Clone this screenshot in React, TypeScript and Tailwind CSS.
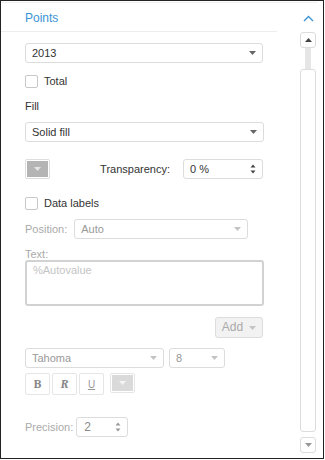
import React from "react";

function Caret({ color = "#666" }: { color?: string }) {
  return (
    <svg width="7" height="4" viewBox="0 0 7 4">
      <path d="M0 0h7L3.5 4z" fill={color} />
    </svg>
  );
}

function Spin({ color = "#444" }: { color?: string }) {
  return (
    <svg width="6" height="10" viewBox="0 0 6 10">
      <path d="M0.5 3.5L3 0.5 5.5 3.5z" fill={color} />
      <path d="M0.5 6.5h5L3 9.5z" fill={color} />
    </svg>
  );
}

function Select({
  value,
  className,
  disabled,
}: {
  value: string;
  className: string;
  disabled?: boolean;
}) {
  return (
    <div
      className={`h-[20px] flex items-center justify-between border border-[#dcdcdc] rounded-[3px] pl-[6px] pr-[6px] ${
        disabled ? "text-[#999]" : "text-[#333]"
      } ${className}`}
    >
      <span>{value}</span>
      <Caret color={disabled ? "#c4c4c4" : "#666"} />
    </div>
  );
}

function Checkbox({ label }: { label: string }) {
  return (
    <div className="h-[14px] flex items-center gap-[6px]">
      <div className="w-[13px] h-[13px] border border-[#c8c8c8] rounded-[2px] bg-white" />
      <span className="text-[#333] pt-[1px]">{label}</span>
    </div>
  );
}

export default function App() {
  return (
    <div
      className="w-[324px] h-[459px] border border-[#222] bg-white text-[11px] leading-[13px] overflow-hidden"
      style={{ fontFamily: '"Liberation Sans", Arial, sans-serif' }}
    >
      <div className="h-[1px]" />
      <div className="w-[316px] border-t border-[#efefef]" />
      <div className="flex">
        <div className="w-[299px] flex flex-col">
          <div className="h-[29px] w-[276px] border-b border-[#ededed] flex items-center pl-[24px] pt-[2px]">
            <span className="text-[12px] text-[#3a93d4]">Points</span>
          </div>

          <div className="pl-[24px] flex flex-col">
            <Select value="2013" className="mt-[11px] w-[238px]" />

            <div className="mt-[11px]">
              <Checkbox label="Total" />
            </div>

            <div className="mt-[11px] h-[13px] pt-[1px] text-[#333]">Fill</div>

            <Select value="Solid fill" className="mt-[10px] w-[239px]" />

            <div className="mt-[17px] h-[20px] flex items-center w-[238px]">
              <div className="w-[25px] h-[20px] border border-[#dedede] rounded-[2px] p-[1px]">
                <div className="w-full h-full bg-[#b4b4b4] flex items-center justify-center">
                  <Caret color="#e4e4e4" />
                </div>
              </div>
              <span className="ml-auto mr-[13px] text-[#333]">Transparency:</span>
              <div className="w-[80px] h-[20px] border border-[#dcdcdc] rounded-[3px] flex items-center justify-between pl-[6px] pr-[6px] text-[#333]">
                <span>0 %</span>
                <Spin />
              </div>
            </div>

            <div className="mt-[17px]">
              <Checkbox label="Data labels" />
            </div>

            <div className="mt-[9px] flex items-center gap-[7px]">
              <span className="text-[#aaa]">Position:</span>
              <Select value="Auto" disabled className="w-[174px]" />
            </div>

            <div className="mt-[8px] h-[12px] pt-[1px] text-[#aaa]">Text:</div>
            <div className="mt-[1px] w-[239px] h-[46px] border-2 border-[#d2d2d2] rounded-[3px] px-[6px] pt-[2px] text-[#c4c4c4]">
              %Autovalue
            </div>

            <div className="mt-[11px] w-[238px] flex justify-end">
              <div className="w-[48px] h-[21px] bg-[#f2f2f2] border border-[#dcdcdc] rounded-[3px] flex items-center justify-center gap-[6px] text-[12px] text-[#aaa]">
                <span>Add</span>
                <Caret color="#c4c4c4" />
              </div>
            </div>

            <div className="mt-[10px] flex gap-[5px]">
              <Select value="Tahoma" disabled className="w-[139px]" />
              <Select value="8" disabled className="w-[56px]" />
            </div>

            <div className="mt-[5px] flex items-start">
              <div className="w-[25px] h-[22px] border border-[#e6e6e6] rounded-[2px] flex items-center justify-center text-[#888] text-[12px] font-bold font-serif">
                B
              </div>
              <div className="ml-[2px] w-[25px] h-[22px] border border-[#e6e6e6] rounded-[2px] flex items-center justify-center text-[#888] text-[12px] font-bold italic font-serif">
                R
              </div>
              <div className="ml-[2px] w-[25px] h-[22px] border border-[#e6e6e6] rounded-[2px] flex items-center justify-center text-[#999] text-[10px] underline">
                U
              </div>
              <div className="ml-[6px] w-[25px] h-[20px] border border-[#e6e6e6] rounded-[2px] p-[1px]">
                <div className="w-full h-full bg-[#dadada] flex items-center justify-center">
                  <Caret color="#f4f4f4" />
                </div>
              </div>
            </div>

            <div className="mt-[22px] flex items-center gap-[3px]">
              <span className="text-[#aaa]">Precision:</span>
              <div className="w-[52px] h-[20px] border border-[#dcdcdc] rounded-[3px] flex items-center justify-between pl-[7px] pr-[6px] text-[#888] text-[12px]">
                <span>2</span>
                <Spin color="#999" />
              </div>
            </div>
          </div>
        </div>

        <div className="w-[16px] flex flex-col items-center">
          <div className="h-[28px] flex items-center justify-center pt-[2px]">
            <svg width="11" height="7" viewBox="0 0 11 7">
              <path d="M1 6L5.5 1.5 10 6" fill="none" stroke="#3a93d4" strokeWidth="1.4" />
            </svg>
          </div>
          <div className="mt-[1px] w-[16px] h-[16px] border border-[#dcdcdc] rounded-[3px] flex items-center justify-center">
            <svg width="7" height="4" viewBox="0 0 7 4">
              <path d="M0 4L3.5 0 7 4z" fill="#444" />
            </svg>
          </div>
          <div className="w-[6px] h-[21px] bg-[#e6e6e6]" />
          <div className="w-[16px] h-[363px] border border-[#dcdcdc] rounded-[3px] bg-white" />
          <div className="mt-[5px] w-[16px] h-[16px] border border-[#dcdcdc] rounded-[3px] flex items-center justify-center">
            <Caret color="#999" />
          </div>
        </div>
      </div>
    </div>
  );
}
